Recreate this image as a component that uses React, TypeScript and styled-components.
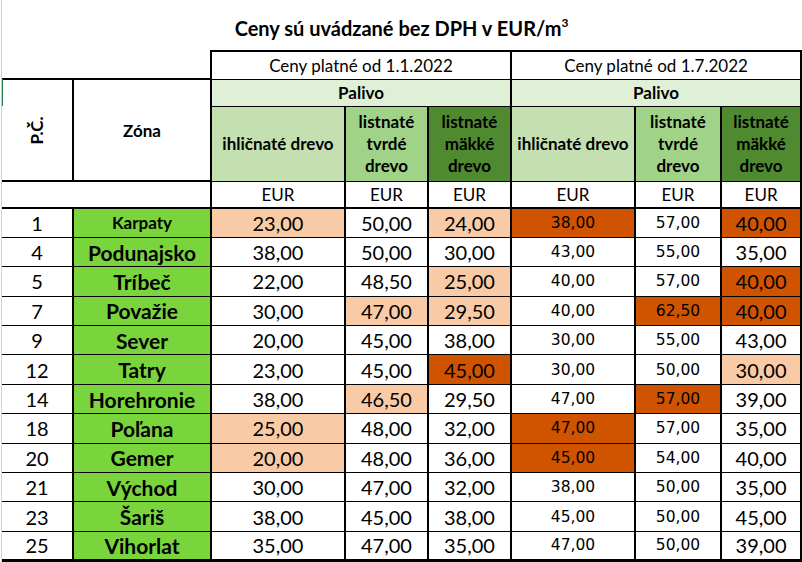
import styled, { createGlobalStyle } from "styled-components";

const GlobalStyle = createGlobalStyle`
  html, body {
    margin: 0;
    padding: 0;
    background: #ffffff;
  }
  body {
    font-family: Lato, "Open Sans", sans-serif;
    color: #000000;
  }
`;

type Tone = "none" | "peach" | "orange";
type Shade = "light" | "mid" | "dark";

const toneColor: Record<Tone, string> = {
  none: "#ffffff",
  peach: "#f9caa6",
  orange: "#d05400",
};

const shadeColor: Record<Shade, string> = {
  light: "#c4e0b1",
  mid: "#a0d388",
  dark: "#4f8a30",
};

const Page = styled.div`
  position: relative;
  margin-left: 1px;
  border-left: 1px solid #cfcfcf;
  height: 562px;
  overflow: hidden;
`;

// Excel row marker on the left edge
const RowMarker = styled.div`
  position: absolute;
  left: -1px;
  top: 79px;
  width: 2px;
  height: 27px;
  background: #1e7b47;
`;

const Table = styled.table`
  border-collapse: collapse;
  table-layout: fixed;
  width: 799px;

  td {
    padding: 0;
    text-align: center;
    vertical-align: middle;
  }
`;

const TitleRow = styled.tr`
  height: 51px;
`;

const PeriodRow = styled.tr`
  height: 28px;
`;

const FuelRow = styled.tr`
  height: 27px;
`;

const WoodRow = styled.tr`
  height: 75px;
`;

const UnitRow = styled.tr`
  height: 27px;
`;

const DataRow = styled.tr`
  height: 29.4px;
`;

const TitleCell = styled.td`
  font-weight: 700;
  font-size: 20px;
  padding-top: 6px !important;
`;

const Sup = styled.sup`
  font-size: 12px;
  vertical-align: 9px;
  line-height: 0;
`;

const BlankCell = styled.td`
  border-bottom: 2px solid #000;
`;

const PeriodCell = styled.td`
  border: 2px solid #000;
  border-bottom-width: 1px;
  font-size: 17px;
`;

const FuelCell = styled.td`
  background: #e0f0d7;
  border-left: 2px solid #000;
  border-right: 2px solid #000;
  border-bottom: 1px solid #000;
  font-weight: 700;
  font-size: 17px;
`;

const SideHead = styled.td`
  border-right: 2px solid #000;
  border-bottom: 2px solid #000;
  font-weight: 700;
  font-size: 17px;
`;

const Rotated = styled.div`
  display: inline-block;
  transform: rotate(-90deg);
  font-size: 17px;
  font-weight: 700;
`;

const WoodCell = styled.td<{ $shade: Shade }>`
  background: ${(p) => shadeColor[p.$shade]};
  border: 2px solid #000;
  border-top: none;
  border-bottom-width: 1px;
  font-weight: 700;
  font-size: 17px;
  line-height: 22px;
`;

const UnitCell = styled.td`
  border-left: 2px solid #000;
  border-right: 2px solid #000;
  border-bottom: 2px solid #000;
  font-size: 17px;
`;

const IndexCell = styled.td`
  border-bottom: 1px solid #000;
  border-right: 2px solid #000;
  font-size: 20px;
`;

const ZoneCell = styled.td<{ $small?: boolean }>`
  background: #7ad53c;
  border-bottom: 1px solid #000;
  border-right: 2px solid #000;
  font-weight: 700;
  font-size: ${(p) => (p.$small ? "17px" : "21px")};
`;

const NumCell = styled.td<{ $tone: Tone; $alt?: boolean }>`
  background: ${(p) => toneColor[p.$tone]};
  border-bottom: 1px solid #000;
  border-right: 2px solid #000;
  font-family: ${(p) => (p.$alt ? '"DejaVu Sans", Verdana, sans-serif' : 'Lato, "Open Sans", sans-serif')};
  font-size: ${(p) => (p.$alt ? "15.5px" : "20px")};
`;

const LastRow = styled(DataRow)`
  td {
    border-bottom: 3px solid #000;
  }
`;

type Row = {
  no: number;
  zone: string;
  values: string[];
  tones: Tone[];
};

const p: Tone = "peach";
const o: Tone = "orange";
const n: Tone = "none";

const rows: Row[] = [
  { no: 1, zone: "Karpaty", values: ["23,00", "50,00", "24,00", "38,00", "57,00", "40,00"], tones: [p, n, p, o, n, o] },
  { no: 4, zone: "Podunajsko", values: ["38,00", "50,00", "30,00", "43,00", "55,00", "35,00"], tones: [n, n, n, n, n, n] },
  { no: 5, zone: "Tríbeč", values: ["22,00", "48,50", "25,00", "40,00", "57,00", "40,00"], tones: [n, n, p, n, n, o] },
  { no: 7, zone: "Považie", values: ["30,00", "47,00", "29,50", "40,00", "62,50", "40,00"], tones: [n, p, p, n, o, o] },
  { no: 9, zone: "Sever", values: ["20,00", "45,00", "38,00", "30,00", "55,00", "43,00"], tones: [n, n, n, n, n, n] },
  { no: 12, zone: "Tatry", values: ["23,00", "45,00", "45,00", "30,00", "50,00", "30,00"], tones: [n, n, o, n, n, p] },
  { no: 14, zone: "Horehronie", values: ["38,00", "46,50", "29,50", "47,00", "57,00", "39,00"], tones: [n, p, n, n, o, n] },
  { no: 18, zone: "Poľana", values: ["25,00", "48,00", "32,00", "47,00", "57,00", "35,00"], tones: [p, n, n, o, n, n] },
  { no: 20, zone: "Gemer", values: ["20,00", "48,00", "36,00", "45,00", "54,00", "40,00"], tones: [p, n, n, o, n, n] },
  { no: 21, zone: "Východ", values: ["30,00", "47,00", "32,00", "38,00", "50,00", "35,00"], tones: [n, n, n, n, n, n] },
  { no: 23, zone: "Šariš", values: ["38,00", "45,00", "38,00", "45,00", "50,00", "45,00"], tones: [n, n, n, n, n, n] },
  { no: 25, zone: "Vihorlat", values: ["35,00", "47,00", "35,00", "47,00", "50,00", "39,00"], tones: [n, n, n, n, n, n] },
];

const widths = [71, 138, 134, 83, 83, 124, 86, 80];

const woods: { shade: Shade; lines: string[] }[] = [
  { shade: "light", lines: ["ihličnaté drevo"] },
  { shade: "mid", lines: ["listnaté", "tvrdé", "drevo"] },
  { shade: "dark", lines: ["listnaté", "mäkké", "drevo"] },
];

function renderRow(row: Row) {
  const cells = (
    <>
      <IndexCell>{row.no}</IndexCell>
      <ZoneCell $small={row.zone === "Karpaty"}>{row.zone}</ZoneCell>
      {row.values.map((v, i) => (
        <NumCell key={i} $tone={row.tones[i]} $alt={i === 3 || i === 4}>
          {v}
        </NumCell>
      ))}
    </>
  );
  return row.no === 25 ? <LastRow key={row.no}>{cells}</LastRow> : <DataRow key={row.no}>{cells}</DataRow>;
}

export default function App() {
  return (
    <>
      <GlobalStyle />
      <Page>
        <RowMarker />
        <Table>
          <colgroup>
            {widths.map((w, i) => (
              <col key={i} style={{ width: w }} />
            ))}
          </colgroup>
          <tbody>
            <TitleRow>
              <TitleCell colSpan={8}>
                Ceny sú uvádzané bez DPH v EUR/m<Sup>3</Sup>
              </TitleCell>
            </TitleRow>
            <PeriodRow>
              <BlankCell colSpan={2} />
              <PeriodCell colSpan={3}>Ceny platné od 1.1.2022</PeriodCell>
              <PeriodCell colSpan={3}>Ceny platné od 1.7.2022</PeriodCell>
            </PeriodRow>
            <FuelRow>
              <SideHead rowSpan={2}>
                <Rotated>P.Č.</Rotated>
              </SideHead>
              <SideHead rowSpan={2}>Zóna</SideHead>
              <FuelCell colSpan={3}>Palivo</FuelCell>
              <FuelCell colSpan={3}>Palivo</FuelCell>
            </FuelRow>
            <WoodRow>
              {[0, 1].flatMap((g) =>
                woods.map((w, i) => (
                  <WoodCell key={`${g}-${i}`} $shade={w.shade}>
                    {w.lines.map((l, j) => (
                      <div key={j}>{l}</div>
                    ))}
                  </WoodCell>
                ))
              )}
            </WoodRow>
            <UnitRow>
              <BlankCell colSpan={2} />
              {widths.slice(2).map((_, i) => (
                <UnitCell key={i}>EUR</UnitCell>
              ))}
            </UnitRow>
            {rows.map(renderRow)}
          </tbody>
        </Table>
      </Page>
    </>
  );
}
